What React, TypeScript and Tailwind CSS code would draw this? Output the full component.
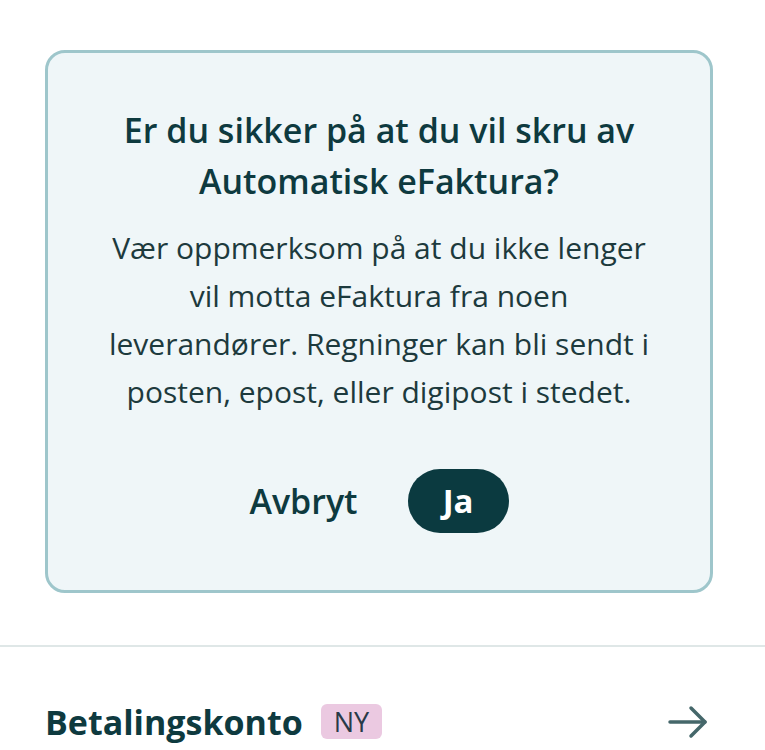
import React from "react";

export default function App() {
  return (
    <div
      className="w-[765px] h-[750px] bg-white overflow-hidden"
      style={{ fontFamily: '"Open Sans", "Noto Sans", sans-serif' }}
    >
      <div className="pt-[50px] pl-[45px]">
        <div className="w-[668px] rounded-[20px] border-[3px] border-[#9ec6cb] bg-[#eff6f8] pt-[52px] pb-[57px] px-[20px] flex flex-col items-center text-center">
          <h2 className="text-[34px] leading-[51px] font-semibold text-[#0e3a3f] whitespace-nowrap">
            Er du sikker på at du vil skru av
            <br />
            Automatisk eFaktura?
          </h2>
          <p className="mt-[17px] text-[30px] leading-[48px] text-[#1d3a3d] whitespace-nowrap">
            Vær oppmerksom på at du ikke lenger
            <br />
            vil motta eFaktura fra noen
            <br />
            leverandører. Regninger kan bli sendt i
            <br />
            posten, epost, eller digipost i stedet.
          </p>
          <div className="mt-[53px] flex items-center gap-[50px]">
            <button className="text-[34px] font-semibold text-[#0e3a3f] leading-none">
              Avbryt
            </button>
            <button className="h-[64px] w-[101px] rounded-full bg-[#0b3a40] text-white text-[33px] font-bold flex items-center justify-center">
              Ja
            </button>
          </div>
        </div>
      </div>
      <div className="mt-[52px] h-[2px] bg-[#dfe7e7]" />
      <div className="flex items-center justify-between pl-[45px] pr-[56px] pt-[57px]">
        <div className="flex items-center gap-[18px]">
          <span className="text-[34px] font-bold text-[#0e3a3f] leading-none">
            Betalingskonto
          </span>
          <span className="h-[35px] px-[13px] rounded-[6px] bg-[#ebc9e1] text-[#283a48] text-[27px] flex items-center leading-none">
            NY
          </span>
        </div>
        <svg width="42" height="34" viewBox="0 0 42 34" fill="none" stroke="#45676a" strokeWidth="3.5" strokeLinecap="round" strokeLinejoin="round">
          <path d="M3 17H38" />
          <path d="M24 3L38 17L24 31" />
        </svg>
      </div>
    </div>
  );
}
